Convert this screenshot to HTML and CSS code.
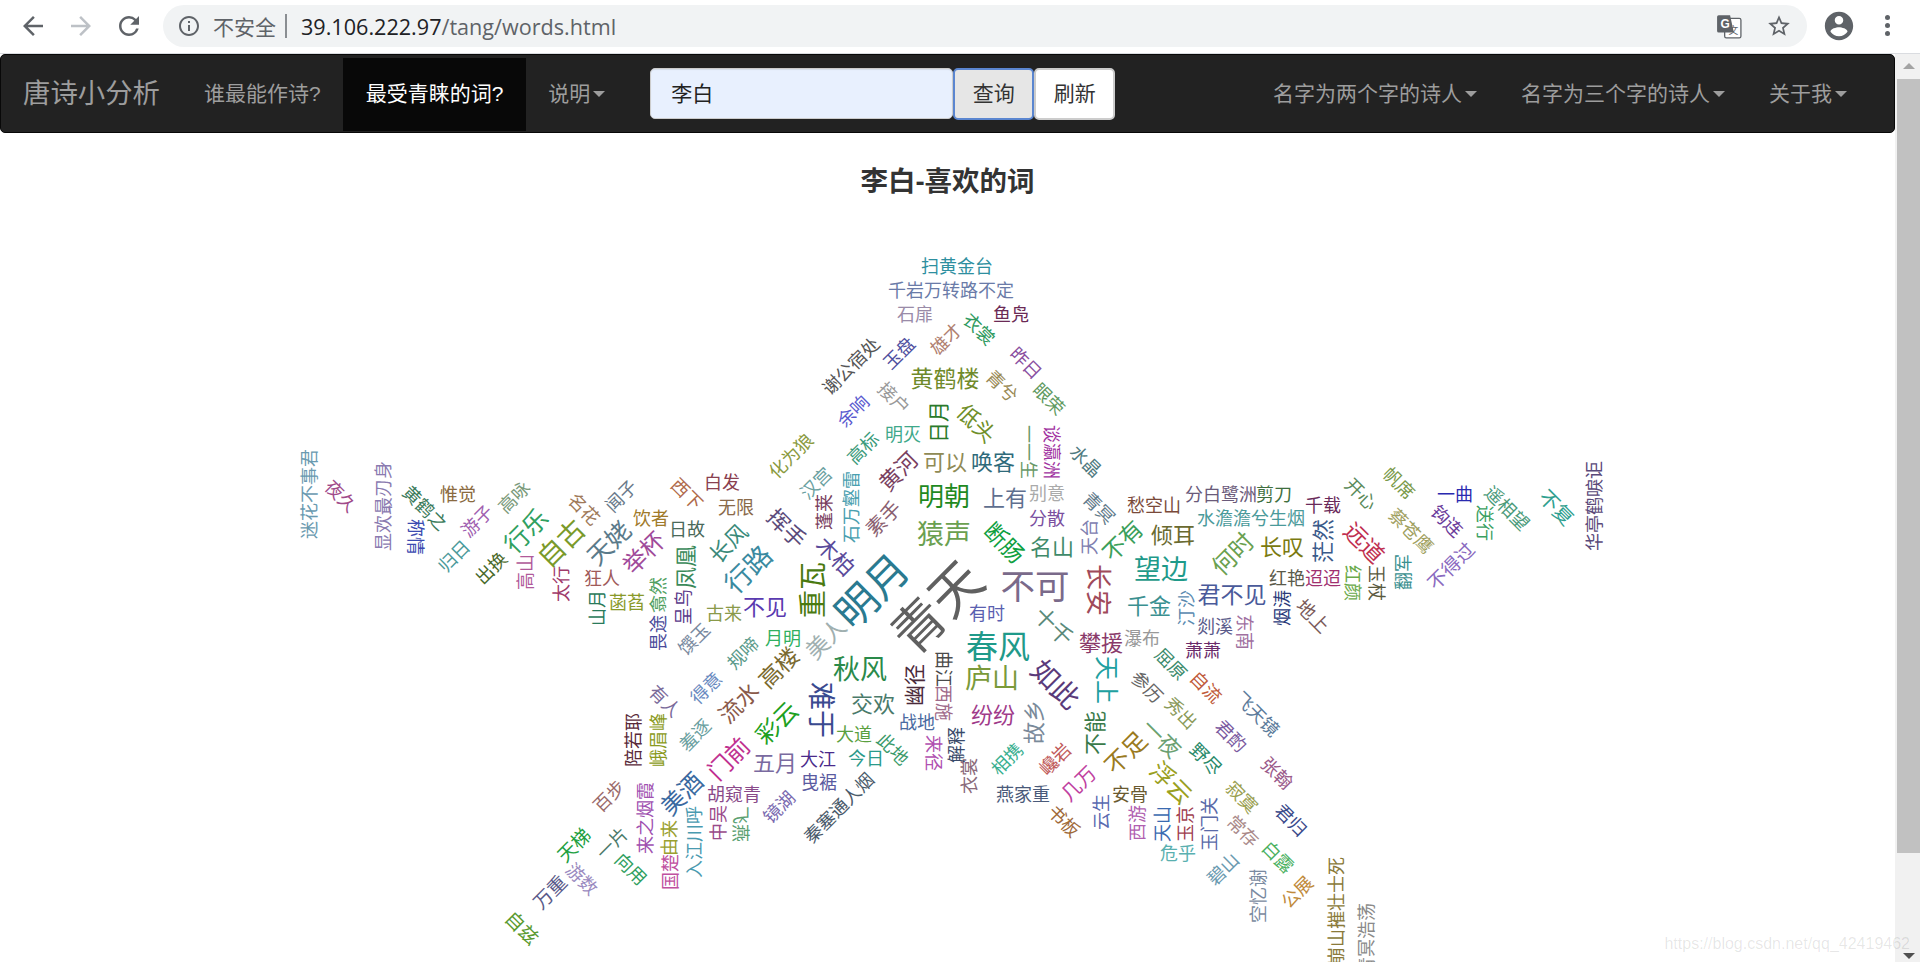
FILE: index.html
```html
<!DOCTYPE html>
<html lang="zh-CN">
<head>
<meta charset="utf-8">
<title>唐诗小分析</title>
<link rel="stylesheet" href="styles.css">
</head>
<body>
<header class="toolbar">
  <div class="nav-btns">
    <button class="tb-btn"><svg viewBox="0 0 24 24" class="ic30"><path d="M20 11H7.83l5.59-5.59L12 4l-8 8 8 8 1.41-1.41L7.83 13H20v-2z"/></svg></button>
    <button class="tb-btn dim"><svg viewBox="0 0 24 24" class="ic30"><path d="M12 4l-1.41 1.41L16.17 11H4v2h12.17l-5.58 5.59L12 20l8-8z"/></svg></button>
    <button class="tb-btn"><svg viewBox="0 0 24 24" class="ic30"><path d="M17.65 6.35A7.958 7.958 0 0 0 12 4c-4.42 0-7.99 3.58-7.99 8s3.57 8 7.99 8c3.73 0 6.84-2.55 7.73-6h-2.08A5.99 5.99 0 0 1 12 18c-3.31 0-6-2.69-6-6s2.69-6 6-6c1.66 0 3.14.69 4.22 1.78L13 11h7V4l-2.35 2.35z"/></svg></button>
  </div>
  <div class="omnibox">
    <svg viewBox="0 0 24 24" class="ic24"><path d="M11 7h2v2h-2zm0 4h2v6h-2zm1-9C6.48 2 2 6.48 2 12s4.48 10 10 10 10-4.48 10-10S17.52 2 12 2zm0 18c-4.41 0-8-3.59-8-8s3.59-8 8-8 8 3.59 8 8-3.59 8-8 8z"/></svg>
    <span class="insecure">不安全</span>
    <span class="sep"></span>
    <span class="url"><b>39.106.222.97</b>/tang/words.html</span>
    <svg viewBox="0 0 24 24" class="translate">
      <rect x="8" y="5" width="15" height="18" rx="1.5" fill="#fff" stroke="#5f6368" stroke-width="1.2"/>
      <text x="16" y="19" class="tr-small">文</text>
      <path d="M1 3.5A1.5 1.5 0 0 1 2.500 2H13l3.500 16H2.500A1.500 1.500 0 0 1 1 16.500z"/>
      <text x="8.500" y="14" class="tr-g">G</text>
    </svg>
    <svg viewBox="0 0 24 24" class="star"><path d="M22 9.240l-7.190-.62L12 2 9.190 8.630 2 9.240l5.460 4.730L5.820 21 12 17.270 18.180 21l-1.630-7.030L22 9.240zM12 15.400l-3.760 2.270 1-4.280-3.320-2.880 4.380-.38L12 6.100l1.710 4.040 4.380.38-3.320 2.880 1 4.280L12 15.400z"/></svg>
  </div>
  <div class="tb-right">
    <svg viewBox="0 0 24 24" class="avatar"><path d="M12 2C6.480 2 2 6.480 2 12s4.480 10 10 10 10-4.480 10-10S17.520 2 12 2zm0 3c1.660 0 3 1.340 3 3s-1.340 3-3 3-3-1.340-3-3 1.340-3 3-3zm0 14.200c-2.500 0-4.710-1.280-6-3.220.03-1.990 4-3.080 6-3.080 1.990 0 5.970 1.090 6 3.080-1.290 1.940-3.500 3.220-6 3.220z"/></svg>
    <span class="kebab"><i></i><i></i><i></i></span>
  </div>
</header>
<div class="page">
  <main class="main">
    <nav class="navbar">
      <a class="brand">唐诗小分析</a>
      <a class="item">谁最能作诗?</a>
      <a class="item active">最受青睐的词?</a>
      <a class="item">说明<i class="caret"></i></a>
      <form class="search">
        <input class="search-input" value="李白">
        <button type="button" class="btn pressed">查询</button>
        <button type="button" class="btn">刷新</button>
      </form>
      <div class="nav-right">
        <a class="item">名字为两个字的诗人<i class="caret"></i></a>
        <a class="item">名字为三个字的诗人<i class="caret"></i></a>
        <a class="item">关于我<i class="caret"></i></a>
      </div>
    </nav>
    <h2 class="title">李白-喜欢的词</h2>
    <section class="cloud">
<span class="w" style="left:957px;top:68px;color:#2e8f9f">扫黄金台</span>
<span class="w" style="left:951px;top:92px;color:#6a7ba8">千岩万转路不定</span>
<span class="w" style="left:915px;top:116px;color:#9a8ba8">石扉</span>
<span class="w" style="left:1011px;top:116px;color:#6b2a55">鱼凫</span>
<span class="w m45" style="left:945px;top:141px;color:#b08070">雄才</span>
<span class="w p45" style="left:980px;top:131px;color:#2f9a60">衣裳</span>
<span class="w m45" style="left:850px;top:168px;color:#555555">谢公宿处</span>
<span class="w m45" style="left:898px;top:155px;color:#5050a0">玉盘</span>
<span class="w p45" style="left:1027px;top:165px;color:#8a4fa0">昨日</span>
<span class="w" style="left:945px;top:180px;font-size:23px;color:#6f8a2a">黄鹤楼</span>
<span class="w p45" style="left:1003px;top:188px;color:#998a55">青兮</span>
<span class="w p45" style="left:1050px;top:201px;color:#5f9a5f">眼荣</span>
<span class="w m45" style="left:852px;top:213px;color:#5a5acf">余响</span>
<span class="w p45" style="left:895px;top:200px;color:#999999">接户</span>
<span class="w m90" style="left:937px;top:225px;font-size:21px;color:#2a7a2a">日月</span>
<span class="w p45" style="left:978px;top:225px;font-size:22px;color:#6f8f2a">低头</span>
<span class="w" style="left:903px;top:236px;color:#3fa88a">明灭</span>
<span class="w p90" style="left:1030px;top:255px;color:#6a9a6a">一一生</span>
<span class="w p90" style="left:1053px;top:255px;color:#a030a0">谈瀛洲</span>
<span class="w p45" style="left:1087px;top:263px;color:#4f7a80">水晶</span>
<span class="w m45" style="left:862px;top:250px;color:#3a9a7a">高标</span>
<span class="w" style="left:945px;top:263px;font-size:22px;color:#8f8a55">可以</span>
<span class="w" style="left:993px;top:263px;font-size:22px;color:#2f6a7a">唤客</span>
<span class="w m45" style="left:897px;top:273px;font-size:22px;color:#7a3f5f">黄河</span>
<span class="w m45" style="left:790px;top:258px;color:#8a9a40">化为狼</span>
<span class="w m45" style="left:815px;top:285px;color:#6aa0a0">汉宫</span>
<span class="w m90" style="left:850px;top:310px;color:#4aa0b0">石万壑雷</span>
<span class="w m90" style="left:823px;top:315px;color:#7a4060">蓬莱</span>
<span class="w m45" style="left:883px;top:321px;font-size:20px;color:#8a6070">素手</span>
<span class="w" style="left:944px;top:298px;font-size:26px;color:#1f8a1f">明朝</span>
<span class="w" style="left:1005px;top:299px;font-size:22px;color:#5f6f8f">上有</span>
<span class="w" style="left:1047px;top:295px;color:#aaaaaa">别意</span>
<span class="w" style="left:1047px;top:320px;color:#7a4fa0">分散</span>
<span class="w p45" style="left:1100px;top:310px;color:#5f7a8a">青冥</span>
<span class="w m90" style="left:1088px;top:340px;color:#8080b0">天台</span>
<span class="w" style="left:1154px;top:307px;color:#7a4a3a">愁空山</span>
<span class="w" style="left:1221px;top:296px;color:#6a5a7a">分白鹭洲</span>
<span class="w" style="left:1274px;top:296px;color:#3f6f3f">剪刀</span>
<span class="w" style="left:1251px;top:320px;color:#4a9a9a">水澹澹兮生烟</span>
<span class="w" style="left:1323px;top:307px;color:#6a2a5a">千载</span>
<span class="w p45" style="left:1362px;top:296px;color:#5a8a5a">开心</span>
<span class="w p45" style="left:1400px;top:285px;color:#7a9a4a">帆席</span>
<span class="w p45" style="left:1412px;top:333px;color:#a0a060">蔡苍鹰</span>
<span class="w p45" style="left:1448px;top:323px;color:#6a3a9a">钩连</span>
<span class="w" style="left:1455px;top:296px;color:#2a2ab0">一曲</span>
<span class="w p90" style="left:1486px;top:326px;color:#3aa060">送行</span>
<span class="w p45" style="left:1508px;top:310px;color:#4a9a7a">遥相望</span>
<span class="w p45" style="left:1557px;top:310px;font-size:20px;color:#2fa090">不复</span>
<span class="w m90" style="left:1593px;top:309px;color:#5a4a7a">华亭鹤唳讵</span>
<span class="w m45" style="left:1450px;top:368px;font-size:19px;color:#8a6ac0">不得过</span>
<span class="w m90" style="left:1402px;top:375px;color:#3a9090">翻军</span>
<span class="w p90" style="left:1378px;top:386px;color:#5a5a40">玉杖</span>
<span class="w p90" style="left:1354px;top:386px;color:#6aaa4a">红颜</span>
<span class="w" style="left:1323px;top:380px;color:#a03070">迢迢</span>
<span class="w" style="left:1287px;top:380px;color:#5a5a4a">红艳</span>
<span class="w m90" style="left:1321px;top:344px;font-size:22px;color:#3a5a8a">茫然</span>
<span class="w p45" style="left:1365px;top:345px;font-size:23px;color:#c03050">远道</span>
<span class="w" style="left:1282px;top:348px;font-size:22px;color:#7a7a10">长叹</span>
<span class="w m45" style="left:1232px;top:356px;font-size:24px;color:#6aa050">何时</span>
<span class="w" style="left:1173px;top:336px;font-size:22px;color:#6a6a30">倾耳</span>
<span class="w" style="left:1161px;top:370px;font-size:27px;color:#1f9a8a">望边</span>
<span class="w m45" style="left:1122px;top:343px;font-size:23px;color:#3aa05a">不有</span>
<span class="w" style="left:1052px;top:348px;font-size:22px;color:#3f8a6a">名山</span>
<span class="w p45" style="left:1005px;top:345px;font-size:23px;color:#10a040">断肠</span>
<span class="w" style="left:944px;top:335px;font-size:27px;color:#6aa050">猿声</span>
<span class="w" style="left:1035px;top:387px;font-size:34.500px;color:#7a6a8a">不可</span>
<span class="w p90" style="left:1100px;top:393px;font-size:26px;color:#a04a5a">长安</span>
<span class="w" style="left:987px;top:415px;color:#5a60b0">有时</span>
<span class="w p45" style="left:1055px;top:428px;font-size:22px;color:#5a8a7a">十千</span>
<span class="w" style="left:1101px;top:444px;font-size:22px;color:#8a3a6a">攀援</span>
<span class="w" style="left:1142px;top:440px;color:#999999">瀑布</span>
<span class="w" style="left:1149px;top:407px;font-size:22px;color:#3a9090">千金</span>
<span class="w m90" style="left:1185px;top:411px;color:#5a8ab0">汀沙</span>
<span class="w" style="left:1232px;top:396px;font-size:23px;color:#4a5a9a">君不见</span>
<span class="w" style="left:1215px;top:428px;color:#5a5a8a">剡溪</span>
<span class="w p90" style="left:1246px;top:435px;color:#a070a0">东南</span>
<span class="w m90" style="left:1281px;top:411px;color:#2a3a7a">烟涛</span>
<span class="w p45" style="left:1314px;top:418px;font-size:19px;color:#7a5a5a">地上</span>
<span class="w" style="left:1203px;top:452px;color:#6a2a6a">萧萧</span>
<span class="w p45" style="left:1172px;top:466px;color:#3a8a6a">屈原</span>
<span class="w p45" style="left:1207px;top:489px;color:#c05a3a">自流</span>
<span class="w p45" style="left:1148px;top:489px;color:#666666">参历</span>
<span class="w p45" style="left:1182px;top:515px;color:#8a9a5a">秀出</span>
<span class="w p45" style="left:1258px;top:516px;color:#5a7a9a">飞天镜</span>
<span class="w p45" style="left:1232px;top:538px;color:#7a5aa0">君酌</span>
<span class="w p45" style="left:1278px;top:575px;color:#9a5a8a">张翰</span>
<span class="w p45" style="left:1163px;top:540px;font-size:22px;color:#6aa070">一夜</span>
<span class="w p45" style="left:1207px;top:561px;color:#2a8a6a">野尽</span>
<span class="w p45" style="left:1172px;top:585px;font-size:24px;color:#9aa020">浮云</span>
<span class="w p45" style="left:1243px;top:599px;color:#9aa050">寂寞</span>
<span class="w p45" style="left:1292px;top:622px;color:#3a4a8a">君归</span>
<span class="w p45" style="left:1244px;top:633px;color:#aa8a8a">常存</span>
<span class="w p45" style="left:1279px;top:659px;color:#4ab060">白露</span>
<span class="w m45" style="left:1296px;top:694px;color:#c08a3a">公展</span>
<span class="w m45" style="left:1222px;top:671px;color:#6a9ab0">碧山</span>
<span class="w m90" style="left:1257px;top:699px;color:#7a8aa0">空忆谢</span>
<span class="w" style="left:1178px;top:655px;color:#5ab0b0">危乎</span>
<span class="w m90" style="left:1208px;top:627px;color:#5a6aa8">玉门关</span>
<span class="w m90" style="left:1184px;top:627px;color:#a04050">玉京</span>
<span class="w m90" style="left:1161px;top:627px;color:#3a6ab0">天山</span>
<span class="w m90" style="left:1136px;top:626px;color:#b060b0">西游</span>
<span class="w m90" style="left:1100px;top:615px;color:#5a6ab0">云生</span>
<span class="w" style="left:1130px;top:596px;color:#6a5a30">安骨</span>
<span class="w p45" style="left:1065px;top:623px;color:#a06a3a">书板</span>
<span class="w m45" style="left:1078px;top:586px;font-size:20px;color:#c040a0">几万</span>
<span class="w" style="left:1023px;top:596px;color:#4a5a7a">燕家重</span>
<span class="w m90" style="left:968px;top:579px;color:#8a6a7a">衣裳</span>
<span class="w m45" style="left:1006px;top:561px;color:#3ab090">相携</span>
<span class="w m45" style="left:1054px;top:561px;color:#c05a5a">巉岩</span>
<span class="w m45" style="left:1125px;top:555px;font-size:24px;color:#9a7a20">不足</span>
<span class="w m90" style="left:1093px;top:536px;font-size:22px;color:#3a7a4a">不能</span>
<span class="w m90" style="left:1032px;top:525px;font-size:22px;color:#7a8a9a">故乡</span>
<span class="w" style="left:993px;top:516px;font-size:22px;color:#a03a8a">纷纷</span>
<span class="w m90" style="left:955px;top:548px;color:#3a4a6a">解释</span>
<span class="w p90" style="left:935px;top:556px;color:#b050b0">来径</span>
<span class="w" style="left:775px;top:564px;font-size:22px;color:#7a6aa0">五月</span>
<span class="w" style="left:818px;top:561px;color:#4a2a8a">大江</span>
<span class="w" style="left:866px;top:560px;color:#2a9a8a">今日</span>
<span class="w p45" style="left:894px;top:551px;color:#3a9a6a">此地</span>
<span class="w" style="left:854px;top:536px;color:#5aa040">大道</span>
<span class="w" style="left:917px;top:524px;color:#4a6aa0">战地</span>
<span class="w p90" style="left:823px;top:513px;font-size:28px;color:#3a4a90">难于</span>
<span class="w" style="left:873px;top:505px;font-size:22px;color:#4a7a6a">交欢</span>
<span class="w m90" style="left:913px;top:488px;font-size:21px;color:#4a2a3a">幽径</span>
<span class="w p90" style="left:945px;top:472px;color:#4a4a4a">曲江</span>
<span class="w p90" style="left:945px;top:506px;color:#a06a8a">西施</span>
<span class="w m45" style="left:776px;top:525px;font-size:24px;color:#20a020">彩云</span>
<span class="w m45" style="left:728px;top:561px;font-size:24px;color:#c03090">门前</span>
<span class="w m45" style="left:738px;top:505px;font-size:23px;color:#8a5a4a">流水</span>
<span class="w m45" style="left:778px;top:470px;font-size:23px;color:#7a6a30">高楼</span>
<span class="w m45" style="left:694px;top:537px;color:#6aa0a0">羞逐</span>
<span class="w m90" style="left:657px;top:543px;color:#8a9a20">峨眉峰</span>
<span class="w m90" style="left:632px;top:543px;color:#5a2a3a">陪若耶</span>
<span class="w m45" style="left:608px;top:598px;color:#9a6a6a">百步</span>
<span class="w m90" style="left:644px;top:621px;color:#a050b0">来之烟霞</span>
<span class="w m45" style="left:681px;top:596px;font-size:24px;color:#3a6aa0">美酒</span>
<span class="w" style="left:734px;top:596px;color:#8a4a8a">胡窥青</span>
<span class="w m90" style="left:717px;top:626px;color:#9a4a8a">中吴</span>
<span class="w p90" style="left:742px;top:627px;color:#5aa070">飞燕</span>
<span class="w m45" style="left:778px;top:609px;color:#7a6ab0">镜湖</span>
<span class="w" style="left:819px;top:584px;color:#5a5aa0">曳裾</span>
<span class="w m45" style="left:838px;top:610px;color:#4a5a6a">秦塞通人烟</span>
<span class="w m90" style="left:693px;top:645px;color:#4a9ab0">入江川呼</span>
<span class="w m90" style="left:669px;top:675px;color:#c050a0">国楚</span>
<span class="w m90" style="left:668px;top:641px;color:#9aa030">由来</span>
<span class="w m45" style="left:611px;top:645px;color:#4a7a6a">一片</span>
<span class="w m45" style="left:573px;top:647px;font-size:19px;color:#20a040">天梯</span>
<span class="w p45" style="left:632px;top:671px;color:#30a060">向用</span>
<span class="w p45" style="left:583px;top:681px;color:#9a8ac0">游数</span>
<span class="w m45" style="left:549px;top:694px;font-size:19px;color:#5a5a8a">万重</span>
<span class="w p45" style="left:523px;top:730px;font-size:19px;color:#5a9a30">自兹</span>
<span class="w m90" style="left:1335px;top:723px;color:#8a7a3a">地崩山摧壮士死</span>
<span class="w m90" style="left:1365px;top:742px;color:#8a8a8a">青冥浩荡</span>
<span class="w m90" style="left:308px;top:297px;color:#6a9ab0">迷花不事君</span>
<span class="w p45" style="left:342px;top:298px;color:#a04a8a">夜久</span>
<span class="w m90" style="left:382px;top:309px;color:#8a7ab0">显欢最刃身</span>
<span class="w p45" style="left:426px;top:310px;color:#3a7a5a">黄鹤之</span>
<span class="w p90" style="left:417px;top:340px;color:#3a4ab0">称情</span>
<span class="w" style="left:458px;top:296px;color:#8a6a40">惟觉</span>
<span class="w m45" style="left:513px;top:299px;color:#7a9a7a">高咏</span>
<span class="w m45" style="left:476px;top:323px;color:#a060b0">游子</span>
<span class="w m45" style="left:453px;top:358px;color:#4a9a9a">归日</span>
<span class="w m45" style="left:490px;top:370px;color:#4a6a2a">出换</span>
<span class="w m45" style="left:525px;top:333px;font-size:25px;color:#30a060">行乐</span>
<span class="w m90" style="left:524px;top:375px;color:#b05a9a">高山</span>
<span class="w m90" style="left:560px;top:387px;color:#a03a6a">太行</span>
<span class="w m45" style="left:560px;top:345px;font-size:27px;color:#7a9a2a">自古</span>
<span class="w p45" style="left:585px;top:311px;color:#a07a5a">名花</span>
<span class="w m45" style="left:620px;top:298px;color:#6a7a8a">闻子</span>
<span class="w m45" style="left:608px;top:345px;font-size:25px;color:#5a7a8a">天姥</span>
<span class="w" style="left:651px;top:320px;color:#a07a2a">饮者</span>
<span class="w m45" style="left:643px;top:355px;font-size:24px;color:#a04a9a">举杯</span>
<span class="w" style="left:602px;top:380px;color:#a05a5a">狂人</span>
<span class="w m90" style="left:596px;top:411px;color:#2a7a5a">山月</span>
<span class="w" style="left:627px;top:404px;color:#8a9a2a">菡萏</span>
<span class="w m90" style="left:657px;top:436px;color:#4a4a9a">畏途</span>
<span class="w m90" style="left:657px;top:398px;color:#50a060">翕然</span>
<span class="w m90" style="left:682px;top:410px;color:#5a3a8a">呈鸟</span>
<span class="w m90" style="left:684px;top:370px;font-size:22px;color:#3a8a5a">凤凰</span>
<span class="w" style="left:687px;top:331px;color:#4a6a5a">日故</span>
<span class="w p45" style="left:688px;top:296px;color:#b06a4a">西下</span>
<span class="w" style="left:722px;top:284px;color:#8a4050">白发</span>
<span class="w" style="left:736px;top:309px;color:#8a6a4a">无限</span>
<span class="w m45" style="left:693px;top:441px;color:#7a8aa0">馔玉</span>
<span class="w" style="left:724px;top:415px;color:#8a9a4a">古来</span>
<span class="w m45" style="left:727px;top:345px;font-size:22px;color:#3a8a7a">长风</span>
<span class="w m45" style="left:747px;top:371px;font-size:27px;color:#3a8aa0">行路</span>
<span class="w" style="left:765px;top:408px;font-size:22px;color:#5a3ab0">不见</span>
<span class="w p45" style="left:788px;top:330px;font-size:22px;color:#5a4a7a">挥手</span>
<span class="w p45" style="left:837px;top:358px;font-size:22px;color:#5a4a9a">木柏</span>
<span class="w m90" style="left:811px;top:393px;font-size:28px;color:#4a7a10">重瓦</span>
<span class="w m45" style="left:870px;top:392px;font-size:42px;color:#2a7a90">明月</span>
<span class="w m45" style="left:935px;top:408px;font-size:52px;color:#606060">青天</span>
<span class="w" style="left:998px;top:447px;font-size:32px;color:#1f9a8a">春风</span>
<span class="w m45" style="left:825px;top:441px;font-size:23px;color:#a0b0b0">美人</span>
<span class="w" style="left:783px;top:440px;color:#30b060">月明</span>
<span class="w m45" style="left:742px;top:455px;color:#5a9a8a">规啼</span>
<span class="w" style="left:860px;top:470px;font-size:27px;color:#2a8a4a">秋风</span>
<span class="w" style="left:992px;top:479px;font-size:27px;color:#7a9a3a">庐山</span>
<span class="w p45" style="left:1057px;top:486px;font-size:28px;color:#5a3a7a">如此</span>
<span class="w p90" style="left:1108px;top:483px;font-size:24px;color:#20a0a0">天上</span>
<span class="w p45" style="left:666px;top:503px;color:#7a6a9a">有人</span>
<span class="w m45" style="left:705px;top:490px;color:#6a8ac0">得意</span>
    </section>
  </main>
  <aside class="scrollbar">
    <span class="arrow-up"></span>
    <span class="thumb"></span>
    <span class="arrow-down"></span>
  </aside>
  <span class="watermark">https://blog.csdn.net/qq_42419462</span>
</div>
</body>
</html>
```
FILE: styles.css
```css
* { box-sizing: border-box; }
html, body { margin: 0; height: 962px; overflow: hidden; background: #fff; }
body { display: flex; flex-direction: column; font-family: "Liberation Sans", "Noto Sans CJK SC", sans-serif; }

/* browser toolbar */
.toolbar { display: flex; height: 54px; flex: none; border-bottom: 1px solid #dadce0; background: #fff; }
.nav-btns { display: flex; width: 153px; padding: 0 0 0 9px; }
.tb-btn { width: 48px; height: 52px; padding: 0; border: 0; background: none; display: flex; align-items: center; justify-content: center; fill: #5f6368; }
.tb-btn.dim { fill: #bdc1c6; }
.ic30 { width: 30px; height: 30px; }
.ic24 { width: 24px; height: 24px; fill: #5f6368; flex: none; }
.omnibox { margin: 5px 0 0 10px; width: 1644px; height: 42px; border-radius: 21px; background: #f1f3f4; display: flex; align-items: center; padding-left: 14px; color: #5f6368; font-size: 21px; }
.insecure { margin-left: 12px; font-family: "Noto Sans CJK SC", sans-serif; font-size: 21px; line-height: 1; }
.sep { width: 2px; height: 24px; background: #8a8e92; margin: 0 14px 0 9px; }
.url { font-family: "Open Sans", "Liberation Sans", sans-serif; font-size: 21.600px; color: #5f6368; }
.url b { font-weight: 400; color: #202124; }
.translate { width: 26px; height: 26px; margin-left: auto; fill: #5f6368; }
.tr-small { font-family: "Noto Sans CJK SC", sans-serif; font-size: 9px; fill: #5f6368; text-anchor: middle; }
.tr-g { font-family: "Liberation Sans", sans-serif; font-size: 11px; font-weight: 700; fill: #fff; text-anchor: middle; }
.star { width: 26px; height: 26px; margin: 0 15px 0 24px; fill: #5f6368; }
.tb-right { flex: 1; display: flex; align-items: center; padding: 0 0 2px 15px; }
.avatar { width: 34px; height: 34px; fill: #5f6368; }
.kebab { display: flex; flex-direction: column; gap: 3px; margin-left: 29px; }
.kebab i { width: 5px; height: 5px; border-radius: 50%; background: #5f6368; }

/* page */
.page { flex: 1; display: flex; min-height: 0; position: relative; }
.main { flex: 1; min-width: 0; display: flex; flex-direction: column; }
.scrollbar { width: 25px; flex: none; background: #f1f1f1; display: flex; flex-direction: column; align-items: center; padding: 9px 0 3px 2px; }
.arrow-up { border: 6px solid transparent; border-top: 0; border-bottom: 6px solid #a3a3a3; }
.thumb { width: 23px; height: 774px; margin-top: 10px; background: #c1c1c1; }
.arrow-down { border: 6px solid transparent; border-bottom: 0; border-top: 6px solid #505050; margin-top: auto; }
.watermark { position: absolute; right: 10px; bottom: 9px; font-size: 16px; color: rgba(0, 0, 0, .1); }

/* navbar */
.navbar { height: 79px; flex: none; display: flex; background: #222; border: 1px solid #080808; border-radius: 5px; padding-bottom: 1px; }
.brand { display: flex; align-items: center; padding: 0 22px 4px; color: #9d9d9d; font-size: 27.400px; }
.item { display: flex; align-items: center; padding: 0 22px 5px; color: #9d9d9d; font-size: 21px; margin-top: 3px; }
.item.active { background: #080808; color: #fff; padding: 0 23px 5px; }
.caret { width: 0; height: 0; margin: 3px 0 0 3px; border: 6px solid transparent; border-bottom: 0; border-top: 6px solid currentColor; }
.search { display: flex; align-items: center; margin-left: 23px; padding-top: 1px; }
.search-input { width: 303px; height: 51px; padding: 0 20px 3px; border: 1px solid #ccc; border-radius: 5px; background: #e8f0fe; font: 21px "Liberation Sans", "Noto Sans CJK SC", sans-serif; color: #222; box-shadow: inset 0 1px 1px rgba(0, 0, 0, .08); }
.btn { width: 81px; height: 52px; padding: 0 0 4px; border: 2px solid #ccc; border-radius: 5px; background: #fff; color: #333; font: 21px "Liberation Sans", "Noto Sans CJK SC", sans-serif; }
.btn.pressed { background: #e6e6e6; border-color: #5b86d0; }
.nav-right { display: flex; margin-left: auto; margin-right: 25px; }

/* title + cloud */
.title { margin: 0; padding-top: 33px; height: 64px; text-align: center; font-size: 27.500px; line-height: 32px; font-weight: 700; color: #333; }
.cloud { flex: 1; position: relative; overflow: hidden; min-height: 0; font-family: "Noto Sans CJK SC", sans-serif; }
.w { position: absolute; font-size: 18px; line-height: 1; white-space: nowrap; transform: translate(-50%, -50%); }
.m45 { transform: translate(-50%, -50%) rotate(-45deg); }
.p45 { transform: translate(-50%, -50%) rotate(45deg); }
.m90 { transform: translate(-50%, -50%) rotate(-90deg); }
.p90 { transform: translate(-50%, -50%) rotate(90deg); }
```
